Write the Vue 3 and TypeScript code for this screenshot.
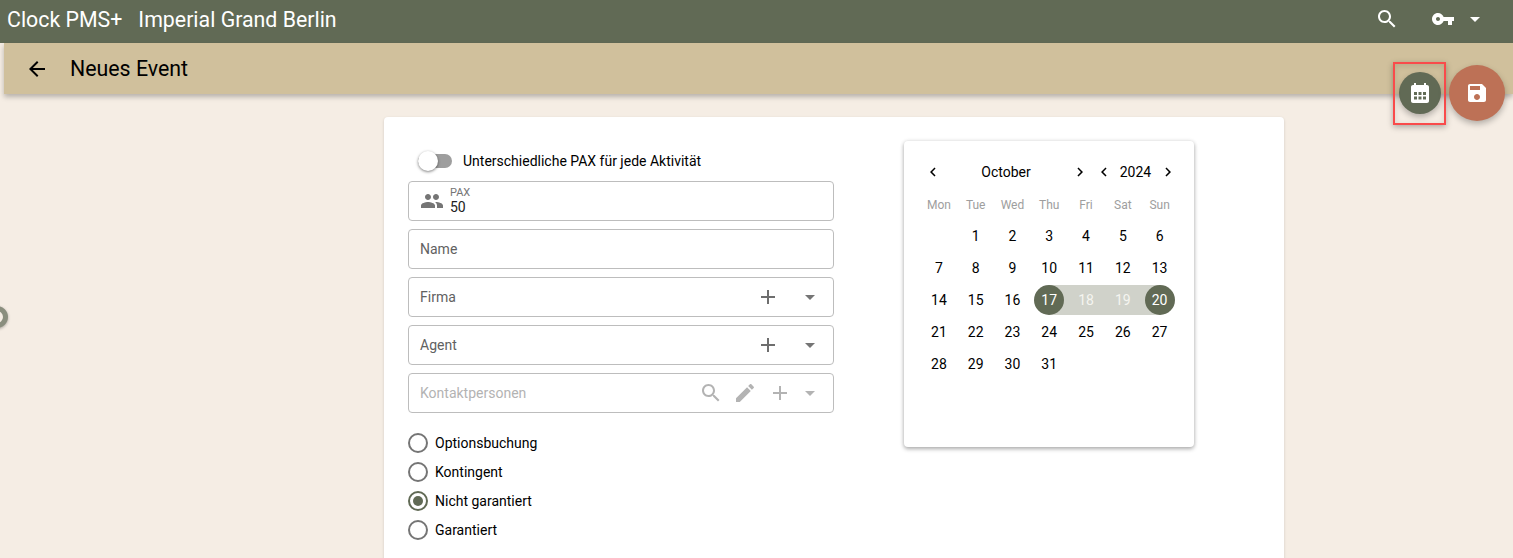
<script setup lang="ts">
const icons = {
  search: 'M15.5 14h-.79l-.28-.27C15.41 12.59 16 11.11 16 9.5 16 5.91 13.09 3 9.5 3S3 5.91 3 9.5 5.91 16 9.5 16c1.61 0 3.09-.59 4.23-1.57l.27.28v.79l5 4.99L20.49 19l-4.99-5zm-6 0C7.01 14 5 11.99 5 9.5S7.01 5 9.5 5 14 7.01 14 9.5 11.99 14 9.5 14z',
  key: 'M12.65 10C11.83 7.67 9.61 6 7 6c-3.31 0-6 2.69-6 6s2.69 6 6 6c2.61 0 4.83-1.67 5.65-4H17v4h4v-4h2v-4H12.65zM7 14c-1.1 0-2-.9-2-2s.9-2 2-2 2 .9 2 2-.9 2-2 2z',
  back: 'M20 11H7.83l5.59-5.59L12 4l-8 8 8 8 1.41-1.41L7.83 13H20v-2z',
  calendar: 'M19 4h-1V2h-2v2H8V2H6v2H5c-1.1 0-2 .9-2 2v14c0 1.1.9 2 2 2h14c1.1 0 2-.9 2-2V6c0-1.1-.9-2-2-2zM6 11v3h3v-3zm4.5 0v3h3v-3zM15 11v3h3v-3zM6 15.5v3h3v-3zm4.5 0v3h3v-3zm4.5 0v3h3v-3z',
  save: 'M17 3H5c-1.11 0-2 .9-2 2v14c0 1.1.89 2 2 2h14c1.1 0 2-.9 2-2V7l-4-4zm-5 16c-1.66 0-3-1.34-3-3s1.34-3 3-3 3 1.34 3 3-1.34 3-3 3zm3-10H5V5h10v4z',
  people: 'M16 11c1.66 0 2.99-1.34 2.99-3S17.66 5 16 5c-1.66 0-3 1.34-3 3s1.34 3 3 3zm-8 0c1.66 0 2.99-1.34 2.99-3S9.66 5 8 5C6.34 5 5 6.34 5 8s1.34 3 3 3zm0 2c-2.33 0-7 1.17-7 3.5V19h14v-2.5c0-2.33-4.67-3.5-7-3.5zm8 0c-.29 0-.62.02-.97.05 1.16.84 1.97 1.97 1.97 3.45V19h6v-2.5c0-2.33-4.67-3.5-7-3.5z',
  add: 'M19 13h-6v6h-2v-6H5v-2h6V5h2v6h6v2z',
  edit: 'M3 17.25V21h3.75L17.81 9.94l-3.75-3.75L3 17.25zM20.71 7.04c.39-.39.39-1.02 0-1.41l-2.34-2.34c-.39-.39-1.02-.39-1.41 0l-1.83 1.83 3.75 3.75 1.83-1.83z',
  drop: 'M7 10l5 5 5-5z',
  left: 'M15.41 7.41L14 6l-6 6 6 6 1.41-1.41L10.83 12z',
  right: 'M10 6L8.59 7.41 13.17 12l-4.58 4.59L10 18l6-6z',
}

const weekdays = ['Mon', 'Tue', 'Wed', 'Thu', 'Fri', 'Sat', 'Sun']
const days: number[] = Array.from({ length: 31 }, (_, i) => i + 1)
const radios = [
  { label: 'Optionsbuchung', on: false },
  { label: 'Kontingent', on: false },
  { label: 'Nicht garantiert', on: true },
  { label: 'Garantiert', on: false },
]
function dayClass(d: number): string[] {
  const c: string[] = []
  if (d === 17) c.push('start')
  if (d === 20) c.push('end')
  if (d === 18 || d === 19) c.push('mid')
  return c
}
</script>

<template>
  <div class="page">
    <header class="topbar">
      <span class="brand">Clock PMS+</span>
      <span class="hotel">Imperial Grand Berlin</span>
      <span class="spacer"></span>
      <svg class="ic top-search" viewBox="0 0 24 24"><path :d="icons.search" /></svg>
      <svg class="ic top-key" viewBox="0 0 24 24"><path :d="icons.key" /></svg>
      <svg class="ic top-drop" viewBox="0 0 24 24"><path :d="icons.drop" /></svg>
    </header>

    <div class="subbar">
      <svg class="ic back" viewBox="0 0 24 24"><path :d="icons.back" /></svg>
      <h1 class="title">Neues Event</h1>
    </div>

    <button class="fab fab-cal" type="button">
      <svg class="ic" viewBox="0 0 24 24"><path fill-rule="evenodd" :d="icons.calendar" /></svg>
    </button>
    <span class="mark"></span>
    <button class="fab fab-save" type="button">
      <svg class="ic" viewBox="0 0 24 24"><path :d="icons.save" /></svg>
    </button>
    <span class="handle"></span>

    <main class="card">
      <section class="form">
        <div class="toggle-row">
          <span class="track"><span class="thumb"></span></span>
          <span>Unterschiedliche PAX für jede Aktivität</span>
        </div>

        <div class="field pax">
          <svg class="ic people" viewBox="0 0 24 24"><path :d="icons.people" /></svg>
          <div class="pax-text">
            <span class="pax-label">PAX</span>
            <span class="pax-value">50</span>
          </div>
        </div>

        <div class="field"><span class="ph">Name</span></div>

        <div class="field">
          <span class="ph">Firma</span>
          <svg class="ic add" viewBox="0 0 24 24"><path :d="icons.add" /></svg>
          <svg class="ic drop" viewBox="0 0 24 24"><path :d="icons.drop" /></svg>
        </div>

        <div class="field">
          <span class="ph">Agent</span>
          <svg class="ic add" viewBox="0 0 24 24"><path :d="icons.add" /></svg>
          <svg class="ic drop" viewBox="0 0 24 24"><path :d="icons.drop" /></svg>
        </div>

        <div class="field disabled">
          <span class="ph">Kontaktpersonen</span>
          <svg class="ic tool t-search" viewBox="0 0 24 24"><path :d="icons.search" /></svg>
          <svg class="ic tool t-edit" viewBox="0 0 24 24"><path :d="icons.edit" /></svg>
          <svg class="ic tool t-add" viewBox="0 0 24 24"><path :d="icons.add" /></svg>
          <svg class="ic drop" viewBox="0 0 24 24"><path :d="icons.drop" /></svg>
        </div>

        <div class="radios">
          <label v-for="r in radios" :key="r.label" class="radio">
            <span class="circle" :class="{ on: r.on }"></span>
            <span>{{ r.label }}</span>
          </label>
        </div>
      </section>

      <aside class="calendar">
        <div class="cal-head">
          <svg class="ic chev" viewBox="0 0 24 24"><path :d="icons.left" /></svg>
          <span class="month">October</span>
          <svg class="ic chev" viewBox="0 0 24 24"><path :d="icons.right" /></svg>
          <svg class="ic chev c-year" viewBox="0 0 24 24"><path :d="icons.left" /></svg>
          <span class="year">2024</span>
          <svg class="ic chev" viewBox="0 0 24 24"><path :d="icons.right" /></svg>
        </div>
        <div class="grid weekdays">
          <span v-for="w in weekdays" :key="w">{{ w }}</span>
        </div>
        <div class="grid days">
          <span class="day blank"></span>
          <span v-for="d in days" :key="d" class="day" :class="dayClass(d)"><b>{{ d }}</b></span>
        </div>
      </aside>
    </main>
  </div>
</template>

<style>
html, body { margin: 0; background: #f5ede4; }
</style>

<style scoped>
.page {
  position: relative;
  height: 558px;
  overflow: hidden;
  background: #f5ede4;
  font-family: Roboto, "Liberation Sans", sans-serif;
  font-size: 14px;
  color: #000;
}
.ic { display: block; fill: currentColor; flex: none; }

.topbar {
  height: 43px;
  display: flex;
  align-items: center;
  padding: 0 0 5px 7px;
  box-sizing: border-box;
  background: #616a55;
  color: #fff;
  font-size: 21.33px;
}
.hotel { margin-left: 16px; }
.spacer { flex: 1; }
.top-search { width: 24px; height: 24px; margin-right: 32px; }
.top-key { width: 24px; height: 24px; margin-right: 8px; }
.top-drop { width: 24px; height: 24px; margin-right: 26px; }

.subbar {
  margin-left: 4px;
  height: 51px;
  display: flex;
  align-items: center;
  background: #d0c09c;
  box-shadow: 0 3px 5px rgba(0, 0, 0, 0.25);
  padding-left: 21px;
  box-sizing: border-box;
}
.back { width: 24px; height: 24px; margin-right: 21px; }
.title { margin: 0; font-size: 21.33px; font-weight: 400; }

.fab {
  position: absolute;
  border: 0;
  padding: 0;
  border-radius: 50%;
  display: flex;
  align-items: center;
  justify-content: center;
  color: #fff;
  box-shadow: 0 3px 6px rgba(0, 0, 0, 0.28);
}
.fab svg { width: 24px; height: 24px; }
.fab-cal { left: 1399px; top: 72px; width: 42px; height: 42px; background: #616a55; }
.fab-save { left: 1449px; top: 65px; width: 56px; height: 56px; background: #bd7156; }
.mark {
  position: absolute;
  left: 1393px;
  top: 62px;
  width: 53px;
  height: 63px;
  box-sizing: border-box;
  border: 2px solid #f94b4b;
  box-shadow: 0 2px 6px rgba(0, 0, 0, 0.3), inset 0 2px 6px rgba(0, 0, 0, 0.12);
}
.handle {
  position: absolute;
  left: -14px;
  top: 306px;
  width: 22px;
  height: 22px;
  box-sizing: border-box;
  border-radius: 50%;
  border: 5px solid #8a8e7e;
  background: #f5ede4;
  box-shadow: 0 1px 3px rgba(0, 0, 0, 0.3);
}

.card {
  width: 900px;
  height: 480px;
  margin: 23px 0 0 384px;
  box-sizing: border-box;
  padding: 24px 0 0 24px;
  display: flex;
  align-items: flex-start;
  background: #fff;
  border-radius: 4px;
  box-shadow: 0 1px 3px rgba(0, 0, 0, 0.15);
}
.form { width: 426px; display: flex; flex-direction: column; gap: 8px; }

.toggle-row {
  height: 40px;
  margin-bottom: -8px;
  display: flex;
  align-items: center;
  padding-left: 10px;
}
.track {
  position: relative;
  width: 34px;
  height: 14px;
  margin-right: 11px;
  border-radius: 7px;
  background: #9e9e9e;
}
.thumb {
  position: absolute;
  left: 0;
  top: -3px;
  width: 20px;
  height: 20px;
  border-radius: 50%;
  background: #fff;
  box-shadow: 0 1px 3px rgba(0, 0, 0, 0.5);
}

.field {
  height: 40px;
  box-sizing: border-box;
  display: flex;
  align-items: center;
  border: 1px solid #bdbdbd;
  border-radius: 4px;
  padding: 0 11px;
  color: #616161;
}
.ph { flex: 1; }
.add { width: 24px; height: 24px; color: #6e6e6e; margin-right: 18px; }
.drop { width: 24px; height: 24px; color: #757575; }
.tool { width: 24px; height: 24px; }
.t-search { margin-right: 10px; }
.t-edit { margin-right: 11px; }
.t-add { margin-right: 6px; }
.disabled { color: #b3b3b3; }
.disabled .drop { color: #b3b3b3; }
.people { width: 24px; height: 24px; margin-right: 6px; color: #757575; }
.pax-text { display: flex; flex-direction: column; }
.pax-label { font-size: 11px; line-height: 11px; color: #757575; }
.pax-value { font-size: 14px; line-height: 15px; margin-top: 2px; color: #212121; }

.radios { display: flex; flex-direction: column; margin-top: 7px; }
.radio { height: 29px; display: flex; align-items: center; gap: 7px; }
.circle {
  width: 20px;
  height: 20px;
  box-sizing: border-box;
  border-radius: 50%;
  border: 2px solid #757575;
  padding: 3px;
}
.circle.on { border-color: #616a55; background: #616a55 content-box; }

.calendar {
  width: 290px;
  height: 306px;
  margin-left: 70px;
  box-sizing: border-box;
  padding: 20px 16px 0 16.5px;
  background: #fff;
  border-radius: 4px;
  box-shadow: 0 2px 4px rgba(0, 0, 0, 0.3), 0 0 4px rgba(0, 0, 0, 0.1);
}
.cal-head {
  height: 22px;
  margin-bottom: 14px;
  display: flex;
  align-items: center;
}
.chev { width: 18px; height: 18px; margin-left: 3px; }
.month { width: 129px; text-align: center; margin-right: -3px; }
.c-year { margin-left: 6px; }
.year { width: 32px; margin-left: 7px; margin-right: 4px; text-align: center; }
.grid { display: grid; grid-template-columns: repeat(7, 1fr); text-align: center; }
.weekdays { font-size: 12px; line-height: 16px; color: #9e9e9e; }
.days { margin-top: 7px; grid-auto-rows: 32px; }
.day { position: relative; display: flex; align-items: center; justify-content: center; }
.day b { position: relative; font-weight: 400; }
.day.mid, .day.start, .day.end { color: #fff; }
.day.mid::before, .day.start::before, .day.end::before {
  content: "";
  position: absolute;
  top: 1px;
  bottom: 1px;
  left: 0;
  right: 0;
  background: #d0d2ca;
}
.day.start::before { left: 50%; }
.day.end::before { right: 50%; }
.day.mid b { color: #f5f5f0; }
.day.start::after, .day.end::after {
  content: "";
  position: absolute;
  top: 1px;
  left: 50%;
  width: 30px;
  height: 30px;
  margin-left: -15px;
  border-radius: 50%;
  background: #616a55;
}
.day.start b, .day.end b { z-index: 1; }
</style>
